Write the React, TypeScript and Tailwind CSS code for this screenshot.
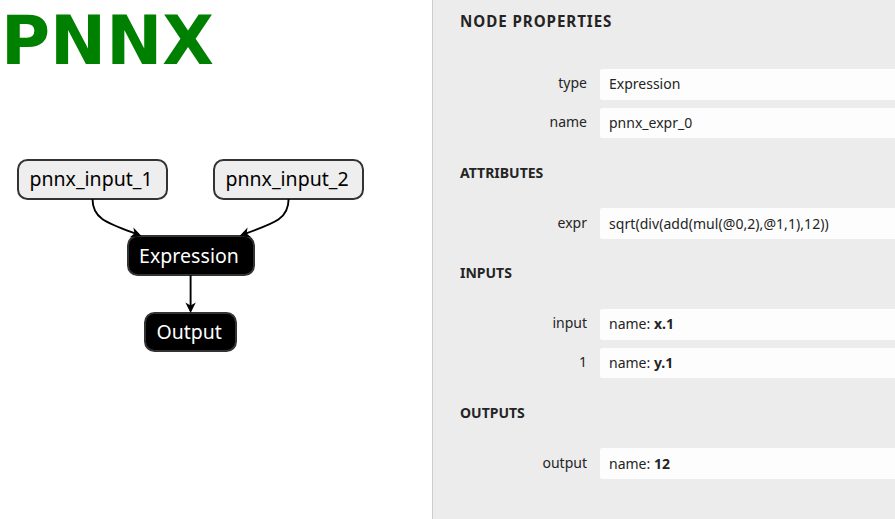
import type { ReactNode } from "react";

type NodeProps = { className: string; children: ReactNode };

function GraphNode({ className, children }: NodeProps) {
  return (
    <div
      className={`absolute box-border flex h-[40.5px] items-center rounded-[10.5px] border-2 border-[#333] pl-[10.5px] text-[19.5px] leading-none whitespace-nowrap ${className}`}
    >
      {children}
    </div>
  );
}

function Edges() {
  return (
    <svg className="absolute inset-0" width="432" height="519" viewBox="0 0 432 519" fill="none">
      <g stroke="#000" strokeWidth="1.9">
        <path d="M92.5 199 C92.5 219 107 223 138 234.5" />
        <path d="M288.6 199 C288.6 219 275 223 243 234.5" />
        <path d="M190.6 275 V311" />
      </g>
      <g fill="#000">
        <path d="M0 0 L-10.5 -5.2 L-7.5 0 L-10.5 5.2 Z" transform="translate(141.5 236) rotate(20)" />
        <path d="M0 0 L-10.5 -5.2 L-7.5 0 L-10.5 5.2 Z" transform="translate(239.5 236) rotate(160)" />
        <path d="M0 0 L-10.5 -5.2 L-7.5 0 L-10.5 5.2 Z" transform="translate(190.6 313) rotate(90)" />
      </g>
    </svg>
  );
}

function Section({ title, className, children }: { title: string; className: string; children: ReactNode }) {
  return (
    <section className={className}>
      <h2 className="h-5 text-[14px] leading-5 font-bold">{title}</h2>
      <div className="mt-[25px] flex flex-col gap-2">{children}</div>
    </section>
  );
}

function Row({ label, tall, low, children }: { label: string; tall?: boolean; low?: boolean; children: ReactNode }) {
  return (
    <div className={`flex ${tall ? "h-[31px]" : "h-[30px]"}`}>
      <div className={`w-[127px] shrink-0 text-right leading-5 ${low ? "pt-[5px]" : "pt-1"}`}>{label}</div>
      <div
        className={`ml-[13px] flex-1 rounded-l-[2px] bg-[#fdfdfd] pl-[9px] leading-5 whitespace-nowrap ${low ? "pt-[6px]" : "pt-[5px]"}`}
      >
        {children}
      </div>
    </div>
  );
}

export default function App() {
  return (
    <div className="flex h-[519px] w-[895px] overflow-hidden bg-white font-['Noto_Sans',sans-serif]">
      <main className="relative w-[432px] shrink-0">
        <h1 className="pt-px pl-[1px] font-['DejaVu_Sans',sans-serif] text-[67px] leading-[80px] font-bold text-[#008000]">
          PNNX
        </h1>
        <GraphNode className="top-[159px] left-[17px] w-[151px] bg-[#eee] pb-px text-black">pnnx_input_1</GraphNode>
        <GraphNode className="top-[159px] left-[213px] w-[151px] bg-[#eee] pb-px text-black">pnnx_input_2</GraphNode>
        <GraphNode className="top-[235px] left-[126.5px] w-[128px] bg-black pt-px tracking-[0.06px] text-white">
          Expression
        </GraphNode>
        <GraphNode className="top-[311.5px] left-[144px] w-[93px] bg-black text-white">Output</GraphNode>
        <Edges />
      </main>
      <aside className="flex-1 border-l border-[#ccc] bg-[#ececec] pl-[27px] text-[14px] text-[#242424]">
        <h1 className="mt-[11px] h-5 origin-left scale-x-[0.945] text-[16px] leading-5 font-bold tracking-[1px]">
          NODE PROPERTIES
        </h1>
        <div className="mt-[38px] mb-[25px] flex flex-col gap-2">
          <Row label="type" tall>Expression</Row>
          <Row label="name">pnnx_expr_0</Row>
        </div>
        <Section title="ATTRIBUTES" className="h-[100px]">
          <Row label="expr" tall low>
            <span className="tracking-[0.06px]">sqrt(div(add(mul(@0,2),@1,1),12))</span>
          </Row>
        </Section>
        <Section title="INPUTS" className="h-[140px] [&>div]:mt-[26px]">
          <Row label="input" tall>
            name: <b>x.1</b>
          </Row>
          <Row label="1">
            name: <b>y.1</b>
          </Row>
        </Section>
        <Section title="OUTPUTS" className="h-[100px]">
          <Row label="output" tall low>
            name: <b>12</b>
          </Row>
        </Section>
      </aside>
    </div>
  );
}
